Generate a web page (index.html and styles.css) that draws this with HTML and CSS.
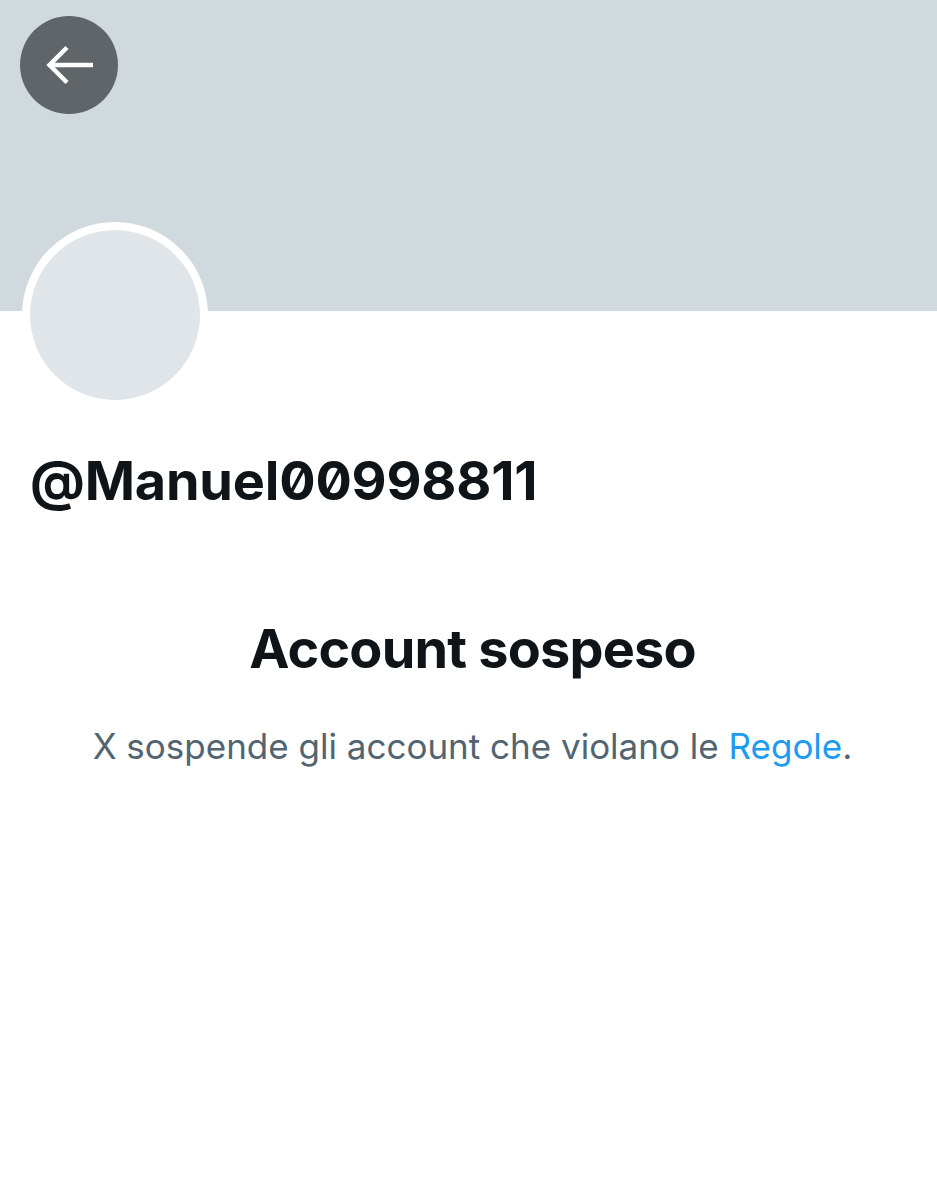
FILE: index.html
```html
<!DOCTYPE html>
<html lang="it">
<head>
<meta charset="utf-8">
<title>Account sospeso</title>
<link rel="stylesheet" href="styles.css">
</head>
<body>
<div class="page">
  <header class="banner">
    <button class="back" aria-label="Indietro">
      <svg viewBox="0 0 98 98" width="98" height="98"><path d="M30 49H73M47 31.5L29.5 49L47 66.5" fill="none" stroke="#fff" stroke-width="4.5" stroke-linecap="butt" stroke-linejoin="miter"/></svg>
    </button>
  </header>
  <section class="profile">
    <div class="avatar"><div class="avatar-inner"></div></div>
    <h1 class="handle">@Manuel00998811</h1>
  </section>
  <section class="notice">
    <h2 class="title">Account sospeso</h2>
    <p class="text">X sospende gli account che violano le <a href="#" class="link">Regole</a>.</p>
  </section>
</div>
</body>
</html>
```
FILE: styles.css
```css
html, body {
  margin: 0;
  padding: 0;
  background: #ffffff;
}
body {
  font-family: Inter, "Noto Sans", "Liberation Sans", sans-serif;
  color: #0f1419;
}
.page {
  width: 937px;
  min-height: 1200px;
  display: flex;
  flex-direction: column;
}
.banner {
  height: 311px;
  background: #cfd9de;
  padding: 16px 0 0 20px;
  box-sizing: border-box;
}
.back {
  width: 98px;
  height: 98px;
  border-radius: 50%;
  border: none;
  background: #5f6568;
  display: flex;
  align-items: center;
  justify-content: center;
  padding: 0;
}
.profile {
  padding: 0 0 0 22px;
  margin-top: -89px;
  position: relative;
}
.avatar {
  width: 186px;
  height: 186px;
  border-radius: 50%;
  background: #ffffff;
  display: flex;
  align-items: center;
  justify-content: center;
}
.avatar-inner {
  width: 170px;
  height: 170px;
  border-radius: 50%;
  background: #dfe5e9;
}
.handle {
  margin: 40px 0 0 8px;
  font-size: 54px;
  font-weight: 700;
  line-height: 66px;
  letter-spacing: -0.2px;
  font-feature-settings: "zero" 1;
}
.notice {
  margin-top: 102px;
  padding-left: 8px;
  text-align: center;
}
.title {
  margin: 0;
  font-size: 54px;
  font-weight: 700;
  line-height: 66px;
  letter-spacing: -0.8px;
}
.text {
  margin: 40px 0 0;
  font-size: 35px;
  line-height: 48px;
  color: #536471;
  font-weight: 400;
}
.link {
  color: #1d9bf0;
  text-decoration: none;
}
```
